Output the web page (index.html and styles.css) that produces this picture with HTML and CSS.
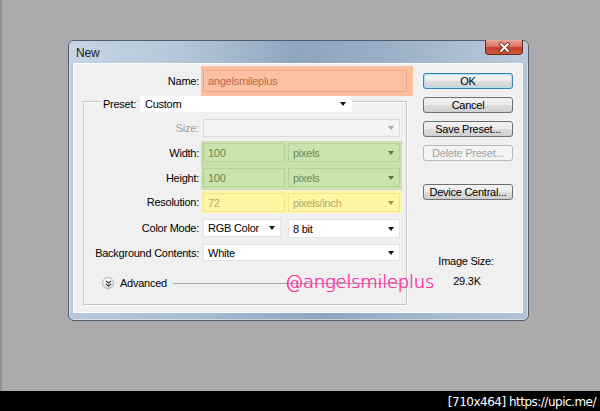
FILE: index.html
```html
<!DOCTYPE html>
<html lang="en">
<head>
    <meta charset="UTF-8">
    <meta name="viewport" content="width=device-width, initial-scale=1.0">
    <title>New</title>
    <link rel="stylesheet" href="styles.css">
</head>
<body>
<div class="screen">
    <div class="desk">
        <div class="dialog">
            <div class="titlebar">
                <span class="title">New</span>
                <span class="close">
                    <svg width="13" height="11" viewBox="0 0 13 11">
                        <path d="M3 2l7 7M10 2l-7 7" stroke="#5e2119" stroke-width="3.6" stroke-linecap="round"/>
                        <path d="M3 2l7 7M10 2l-7 7" stroke="#ffffff" stroke-width="2" stroke-linecap="round"/>
                    </svg>
                </span>
            </div>
            <div class="client">
                <div class="form">
                    <div class="name-row">
                        <span class="lbl name-lbl">Name:</span>
                        <div class="hl-name"><div class="box name-box">angelsmileplus</div></div>
                    </div>

                    <div class="group">
                        <div class="preset-row">
                            <span class="preset-lbl">Preset:</span>
                            <div class="combo custom">Custom<i class="arrow"></i></div>
                        </div>

                        <div class="row r-size">
                            <span class="lbl off">Size:</span>
                            <div class="cell"><div class="combo wide disabled"><i class="arrow"></i></div></div>
                        </div>
                        <div class="row r-width">
                            <span class="lbl">Width:</span>
                            <div class="cell green">
                                <div class="box value g">100</div>
                                <div class="combo unit g">pixels<i class="arrow"></i></div>
                            </div>
                        </div>
                        <div class="row r-height">
                            <span class="lbl">Height:</span>
                            <div class="cell green">
                                <div class="box value g">100</div>
                                <div class="combo unit g">pixels<i class="arrow"></i></div>
                            </div>
                        </div>
                        <div class="row r-res">
                            <span class="lbl">Resolution:</span>
                            <div class="cell yellow">
                                <div class="box value y">72</div>
                                <div class="combo unit y">pixels/inch<i class="arrow"></i></div>
                            </div>
                        </div>
                        <div class="row r-color">
                            <span class="lbl">Color Mode:</span>
                            <div class="cell gap7">
                                <div class="combo mode">RGB Color<i class="arrow"></i></div>
                                <div class="combo unit">8 bit<i class="arrow"></i></div>
                            </div>
                        </div>
                        <div class="row r-bg">
                            <span class="lbl">Background Contents:</span>
                            <div class="cell"><div class="combo wide">White<i class="arrow"></i></div></div>
                        </div>

                        <div class="adv-row">
                            <span class="adv-btn">
                                <svg width="7" height="7" viewBox="0 0 7 7">
                                    <path d="M1 0.8l2.5 2.2 2.5-2.2M1 3.8l2.5 2.2 2.5-2.2" fill="none" stroke="#333" stroke-width="1.1"/>
                                </svg>
                            </span>
                            <span class="adv-lbl">Advanced</span>
                            <span class="adv-line"></span>
                        </div>
                    </div>
                </div>

                <div class="side">
                    <div class="btn default">OK</div>
                    <div class="btn">Cancel</div>
                    <div class="btn">Save Preset...</div>
                    <div class="btn disabled">Delete Preset...</div>
                    <div class="btn device">Device Central...</div>
                    <div class="img-size">
                        <div>Image Size:</div>
                        <div class="img-val">29.3K</div>
                    </div>
                </div>

                <div class="tag">@angelsmileplus</div>
            </div>
        </div>
    </div>
    <div class="stamp">[710x464] https://upic.me/</div>
</div>
</body>
</html>
```

FILE: styles.css
```css
body {
    margin: 0;
    background: #ababab;
    font-family: "Liberation Sans", Arial, sans-serif;
}
.screen {
    width: 600px;
    height: 411px;
    overflow: hidden;
}
.desk {
    height: 391px;
    box-sizing: border-box;
    padding: 40px 0 0 66px;
    background: #ababab;
    border-left: 2px solid #8f8f8f;
}
.stamp {
    height: 20px;
    background: #000;
    color: #fff;
    font-family: "DejaVu Sans", sans-serif;
    font-size: 12px;
    line-height: 22px;
    text-align: right;
    padding-right: 4px;
    letter-spacing: -0.5px;
}

/* window frame */
.dialog {
    width: 461px;
    height: 281px;
    box-sizing: border-box;
    border: 1px solid #4f5e6e;
    border-radius: 6px;
    padding: 0 5px 7px 4px;
    background: linear-gradient(90deg, #b9cadb 0%, #a7bbd0 30%, #8fa6bf 55%, #a2b6cb 75%, #b3c4d6 100%);
    box-shadow: inset 0 0 0 1px rgba(255, 255, 255, 0.45);
}
.titlebar {
    height: 22px;
    display: flex;
    align-items: flex-start;
    justify-content: space-between;
    background: linear-gradient(90deg, #c6d5e4 0%, #b4c6d8 25%, #8ea5be 50%, #9bb0c6 70%, #bccbdb 100%);
    margin: 0 -5px 0 -4px;
    padding: 0 5px 0 4px;
    border-radius: 5px 5px 0 0;
}
.title {
    font-size: 12px;
    color: #1b1b1b;
    margin: 5px 0 0 3px;
    letter-spacing: -0.2px;
}
.close {
    width: 38px;
    height: 15px;
    margin-top: -1px;
    box-sizing: border-box;
    border: 1px solid #6a2a22;
    border-top: 0;
    border-radius: 0 0 4px 4px;
    background: linear-gradient(#eaa597 0%, #d87562 45%, #c3402c 55%, #cf5a3d 100%);
    display: flex;
    align-items: center;
    justify-content: center;
}
.client {
    position: relative;
    height: 250px;
    background: #f0f0f0;
    box-shadow: inset 0 0 0 1px #fbfcfd;
    display: flex;
    font-size: 11px;
    letter-spacing: -0.25px;
    color: #000;
}

/* left form */
.form {
    width: 340px;
    padding-top: 3px;
}
.name-row {
    display: flex;
    align-items: center;
}
.lbl {
    flex: none;
    width: 115px;
    text-align: right;
}
.name-lbl {
    width: 126px;
}
.off {
    color: #a3a3a3;
}
.hl-name {
    margin-left: 2px;
    padding: 4px 6px 4px 2px;
    background: #fcbf9f;
}
.box {
    box-sizing: border-box;
    height: 19px;
    padding-left: 4px;
    display: flex;
    align-items: center;
    border: 1px solid #c9c9c9;
    background: #fff;
}
.name-box {
    width: 204px;
    height: 22px;
    border-color: #eba98a;
    background: #fcc1a2;
    color: #b36d4c;
}
.group {
    margin: 5px 0 0 10px;
    width: 324px;
    height: 204px;
    box-sizing: border-box;
    border: 1px solid #c5c5c5;
    box-shadow: 1px 1px 0 #fff, inset 1px 1px 0 #fff;
}
.preset-row {
    display: flex;
    align-items: center;
    margin-top: -6px;
    padding-left: 16px;
    height: 16px;
}
.preset-lbl {
    width: 37px;
    box-sizing: border-box;
    padding: 0 3px;
    background: #f0f0f0;
    line-height: 14px;
}
.combo {
    box-sizing: border-box;
    height: 18px;
    display: flex;
    align-items: center;
    padding: 0 5px 0 4px;
    background: #fff;
    border: 1px solid #e4e4e4;
}
.custom {
    width: 212px;
    height: 16px;
    margin-left: 3px;
    border-color: #fff;
}
.arrow {
    margin-left: auto;
    width: 0;
    height: 0;
    border-left: 3.5px solid transparent;
    border-right: 3.5px solid transparent;
    border-top: 4px solid #111;
}
.row {
    display: flex;
    align-items: center;
}
.cell {
    width: 201px;
    margin-left: 2px;
    padding: 0 1px 0 2px;
    box-sizing: border-box;
    display: flex;
    gap: 3px;
}
.gap7 {
    gap: 7px;
}
.wide {
    width: 197px;
}
.disabled {
    background: #f4f4f4;
    border-color: #dadada;
}
.disabled .arrow {
    border-top-color: #a8a8a8;
}
.value {
    width: 82px;
}
.unit {
    width: 112px;
    height: 19px;
}
.mode {
    width: 78px;
}
.green {
    background: #c8e2ab;
}
.yellow {
    background: #fdf59f;
}
.box.g, .combo.g {
    background: #cae3ad;
    border-color: #b6d29a;
    color: #6c8a52;
}
.combo.g .arrow {
    border-top-color: #587a3e;
}
.box.y, .combo.y {
    background: #fdf6a2;
    border-color: #f0e58a;
    color: #b5a86a;
}
.combo.y .arrow {
    border-top-color: #9e8f4c;
}
.r-size { margin-top: 4px; }
.r-size .cell { padding-top: 3px; padding-bottom: 3px; }
.r-width { margin-top: 1px; }
.r-width .cell { padding-top: 2px; padding-bottom: 3px; }
.r-height .cell { padding-top: 3px; padding-bottom: 3px; }
.r-res { margin-top: 1px; }
.r-res .cell { padding-top: 2px; padding-bottom: 1px; }
.r-color .cell { padding-top: 6px; padding-bottom: 4px; }
.r-bg .cell { padding-top: 2px; padding-bottom: 3px; }
.r-bg .combo { height: 17px; }

.adv-row {
    display: flex;
    align-items: center;
    height: 20px;
    margin: 9px 0 0 18px;
}
.adv-btn {
    width: 12px;
    height: 12px;
    box-sizing: border-box;
    border: 1px solid #b3b3b3;
    border-radius: 50%;
    background: linear-gradient(#ffffff, #dcdcdc);
    display: flex;
    align-items: center;
    justify-content: center;
}
.adv-lbl {
    margin-left: 6px;
}
.adv-line {
    flex: none;
    width: 231px;
    height: 1px;
    margin-left: 6px;
    background: #a6a6a6;
}

/* right buttons */
.side {
    width: 90px;
    margin-left: 10px;
    padding-top: 10px;
    display: flex;
    flex-direction: column;
}
.btn {
    height: 16px;
    box-sizing: border-box;
    margin-bottom: 8px;
    border: 1px solid #707070;
    border-radius: 3px;
    background: linear-gradient(#f3f3f3 0%, #ebebeb 49%, #dddddd 50%, #cfcfcf 100%);
    text-align: center;
    line-height: 14px;
}
.btn.default {
    border-color: #3c7fb1;
    box-shadow: inset 0 0 0 1px #a4e3fb;
}
.btn.disabled {
    border-color: #b5b9bc;
    background: #f4f4f4;
    color: #a2a2a2;
    margin-bottom: 23px;
}
.img-size {
    margin-top: 47px;
    padding-right: 4px;
    line-height: 13px;
    text-align: center;
}
.img-val {
    margin-top: 7px;
    padding-left: 2px;
}

/* pink signature over the form */
.tag {
    position: absolute;
    left: 212px;
    top: 210px;
    font-family: "DejaVu Sans", sans-serif;
    font-weight: 200;
    font-size: 18px;
    line-height: 18px;
    color: #ff2f9e;
    text-shadow: 0.6px 0 0 #ff2f9e;
}
```
